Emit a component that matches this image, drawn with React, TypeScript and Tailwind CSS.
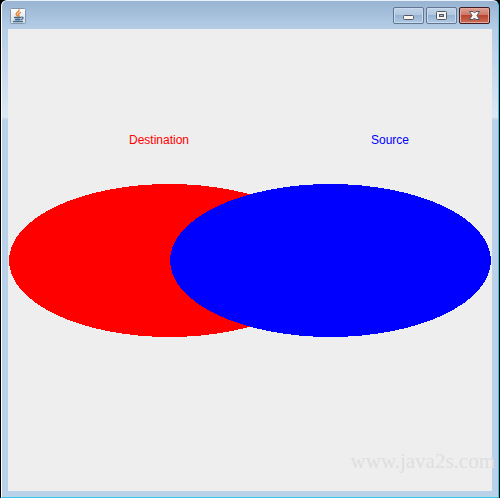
import type { ReactNode } from 'react'

function JavaIcon() {
  return (
    <svg viewBox="0 0 16 16" className="size-4" aria-hidden="true">
      <defs>
        <linearGradient id="tile" x1="0" y1="0" x2="0" y2="1">
          <stop offset="0" stopColor="#ffffff" />
          <stop offset="1" stopColor="#d3dce6" />
        </linearGradient>
      </defs>
      <rect x="0.5" y="0.5" width="15" height="15" rx="1" fill="url(#tile)" stroke="#8496aa" />
      <g fill="none" strokeLinecap="round">
        <path d="M9 2C9.5 4 5.5 4.5 6.3 6.5L8 8.3" stroke="#e8872d" strokeWidth="1.6" />
        <path d="M10.500 4.500C8.500 5.500 8 6.500 9.200 8" stroke="#dd7428" strokeWidth="1.2" />
        <path d="M4.5 9.5H10.5M5.5 11.5H10M3.500 13.5H12.5" stroke="#3f6789" strokeWidth="1.3" />
        <path d="M11.5 9C13.8 8.800 13.5 11 11.5 11.300" stroke="#3f6789" strokeWidth="1.2" />
      </g>
    </svg>
  )
}

type CaptionButtonProps = {
  readonly label: string
  readonly danger?: boolean
  readonly children: ReactNode
}

function CaptionButton({ label, danger = false, children }: CaptionButtonProps) {
  return (
    <button
      type="button"
      aria-label={label}
      className={
        danger
          ? 'flex h-[17px] w-[31px] items-center justify-center rounded-[2px] border border-[#431a23] bg-[linear-gradient(to_bottom,#dda093_0%,#cd7967_45%,#b9442f_50%,#cb6d55_100%)] shadow-[inset_0_0_0_1px_#e3a99d]'
          : 'flex h-[17px] w-[31px] items-center justify-center rounded-[2px] border border-[#62768f] bg-[linear-gradient(to_bottom,#bfd2e8_0%,#b2c8e0_45%,#98b4d3_50%,#afc8e4_100%)] shadow-[inset_0_0_0_1px_#c9dbee]'
      }
    >
      <svg viewBox="0 0 13 9" className="h-[9px] w-[13px]" aria-hidden="true">
        {children}
      </svg>
    </button>
  )
}

function TitleBar() {
  return (
    <header className="flex h-[28px] items-center justify-between bg-linear-to-b from-[#98b4d2] to-[#b5cde7] px-[2px] pt-px">
      <JavaIcon />
      <div className="flex gap-[2px]">
        <CaptionButton label="Minimize">
          <rect x="1.5" y="4.5" width="10" height="4" rx="1" fill="#f7f5ee" stroke="#535666" />
        </CaptionButton>
        <CaptionButton label="Maximize">
          <rect x="1.5" y="0.5" width="10" height="8" rx="1" fill="#f7f5ee" stroke="#535666" />
          <rect x="4.5" y="3.5" width="4" height="2" fill="#9cb9da" stroke="#535666" />
        </CaptionButton>
        <CaptionButton label="Close" danger>
          <path
            d="M1.5 0.5H5L6.5 2L8 0.5H11.5L9 4.5L11.5 8.5H8L6.5 7L5 8.5H1.5L4 4.5Z"
            fill="#f7f5ee"
            stroke="#535666"
          />
        </CaptionButton>
      </div>
    </header>
  )
}

function CompositeDrawing() {
  return (
    <svg
      viewBox="0 0 484 462"
      className="w-full font-['Liberation_Sans',Arial,sans-serif] text-[12px]"
      role="img"
      aria-label="Destination and source ellipses"
    >
      <g shapeRendering="crispEdges">
        <ellipse cx="161.5" cy="231.5" rx="160.5" ry="76.5" fill="#ff0000" />
        <ellipse cx="322.5" cy="231.5" rx="160.5" ry="76.5" fill="#0000ff" />
      </g>
      <text x="121" y="115" fill="#ff0000">
        Destination
      </text>
      <text x="363" y="115" fill="#0000ff">
        Source
      </text>
    </svg>
  )
}

export default function App() {
  return (
    <div className="min-h-screen bg-black px-px">
      <div className="relative flex min-h-screen flex-col rounded-t-[6px] border border-t-[#e8f1fa] border-r-[#35c8e8] border-b-[#35c8e8] border-l-white bg-[#bad1ea] bg-[linear-gradient(to_bottom,#98b4d2_0px,#b5cde7_28px,#dce8f5_116px,#bad1ea_119px)] px-[6px] pb-[6px]">
        <TitleBar />
        <main className="flex-1 bg-[#eeeeee]">
          <CompositeDrawing />
        </main>
        <p className="absolute right-[3px] bottom-[24px] font-['Liberation_Serif','Times_New_Roman',serif] text-[21px] leading-6 text-[#dedee0]">
          www.java2s.com
        </p>
      </div>
    </div>
  )
}
